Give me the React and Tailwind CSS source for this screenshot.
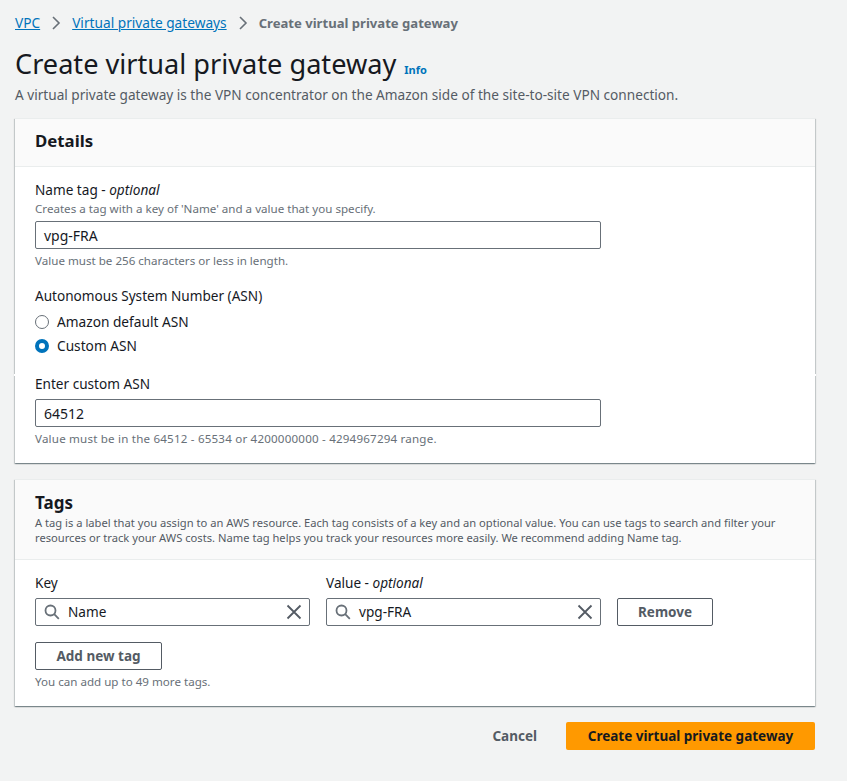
import React from 'react';

const FONT = { fontFamily: '"Noto Sans", sans-serif' };

const Chevron = () => (
  <svg width="10" height="14" viewBox="0 0 10 14" fill="none" stroke="#687078" strokeWidth="1.6" className="mx-[11px] shrink-0">
    <path d="M2 1l6 6-6 6" />
  </svg>
);

const SearchIcon = () => (
  <svg width="16" height="16" viewBox="0 0 16 16" fill="none" stroke="#687078" strokeWidth="1.8" className="shrink-0">
    <circle cx="6.5" cy="6.5" r="5" />
    <path d="M10.2 10.2l4.6 4.6" />
  </svg>
);

const ClearIcon = () => (
  <svg width="16" height="16" viewBox="0 0 16 16" fill="none" stroke="#545b64" strokeWidth="1.8" className="shrink-0">
    <path d="M1.5 1.5l13 13M14.5 1.5l-13 13" />
  </svg>
);

const Hint = ({ children }) => (
  <p className="text-[11.6px] leading-[14px] text-[#687078]">{children}</p>
);

const Label = ({ children }) => (
  <label className="block text-[13.6px] leading-[20px] text-[#16191f]">{children}</label>
);

const TextInput = ({ value }) => (
  <div className="w-[566px] h-[28px] flex items-center px-[8px] bg-white border border-[#687078] rounded-[2px] text-[14px] text-[#16191f]">
    {value}
  </div>
);

const Radio = ({ checked, label }) => (
  <div className="flex items-center gap-[8px] h-[24px]">
    {checked ? (
      <span className="w-[14px] h-[14px] rounded-full border-[4px] border-[#0073bb] bg-white" />
    ) : (
      <span className="w-[14px] h-[14px] rounded-full border border-[#687078] bg-white" />
    )}
    <span className="text-[13.7px] leading-[20px] text-[#16191f]">{label}</span>
  </div>
);

const SearchInput = ({ value }) => (
  <div className="w-[275px] h-[28px] flex items-center bg-white border border-[#687078] rounded-[2px] pl-[8px] pr-[7px]">
    <SearchIcon />
    <span className="ml-[8px] flex-1 text-[13.6px] text-[#16191f]">{value}</span>
    <ClearIcon />
  </div>
);

const OutlineButton = ({ children, width }) => (
  <button className={`${width} h-[28px] bg-white border border-[#545b64] rounded-[2px] text-[13.5px] font-bold text-[#545b64]`}>
    {children}
  </button>
);

const Card = ({ children }) => (
  <section className="w-[800px] bg-white shadow-[0_1px_1px_0_rgba(0,28,36,0.3),1px_1px_1px_0_rgba(0,28,36,0.15),-1px_1px_1px_0_rgba(0,28,36,0.15)] border-t border-[#eaeded]">
    {children}
  </section>
);

export default function App() {
  return (
    <div style={FONT} className="w-[847px] h-[781px] overflow-hidden bg-[#f2f3f3] pl-[15px]">
      <nav className="pt-[10px] h-[36px] flex items-center text-[13.7px] leading-[20px]">
        <a className="text-[#0073bb] underline">VPC</a>
        <Chevron />
        <a className="text-[#0073bb] underline">Virtual private gateways</a>
        <Chevron />
        <span className="text-[13.1px] font-bold text-[#687078]">Create virtual private gateway</span>
      </nav>

      <div className="mt-[8px] flex items-baseline h-[40px]">
        <h1 className="text-[27.15px] leading-[40px] font-normal text-[#16191f]">Create virtual private gateway</h1>
        <a className="ml-[8px] text-[11px] font-bold text-[#0073bb]">Info</a>
      </div>
      <p className="mt-[1px] text-[13.64px] leading-[20px] text-[#545b64] mb-[13px]">
        A virtual private gateway is the VPN concentrator on the Amazon side of the site-to-site VPN connection.
      </p>

      <Card>
        <div className="h-[48px] px-[20px] pb-[4px] flex items-center bg-[#fafafa] border-b border-[#eaeded]">
          <h2 className="text-[16.8px] font-bold text-[#16191f]">Details</h2>
        </div>
        <div className="px-[20px] pt-[13px] pb-[17px]">
          <Label>Name tag - <i>optional</i></Label>
          <div className="mt-[2px]"><Hint>Creates a tag with a key of 'Name' and a value that you specify.</Hint></div>
          <div className="mt-[5px]"><TextInput value="vpg-FRA" /></div>
          <div className="mt-[5px]"><Hint>Value must be 256 characters or less in length.</Hint></div>

          <div className="mt-[18px]"><Label>Autonomous System Number (ASN)</Label></div>
          <div className="mt-[4px]">
            <Radio label="Amazon default ASN" />
            <Radio checked label="Custom ASN" />
          </div>

          <div className="relative mt-[16px]">
            {/* small break in the card edge where the custom ASN block starts */}
            <div className="absolute top-0 -left-[21px] w-[802px] h-[2px] bg-white" />
            <Label>Enter custom ASN</Label>
          </div>
          <div className="mt-[5px]"><TextInput value="64512" /></div>
          <div className="mt-[5px] tracking-[0.19px]"><Hint>Value must be in the 64512 - 65534 or 4200000000 - 4294967294 range.</Hint></div>
        </div>
      </Card>

      <div className="mt-[16px]">
        <Card>
          <div className="h-[80px] px-[20px] pt-[12px] bg-[#fafafa] border-b border-[#eaeded]">
            <h2 className="text-[17px] leading-[22px] font-bold text-[#16191f]">Tags</h2>
            <p className="mt-[1px] text-[11.18px] leading-[15px] text-[#545b64] w-[760px]">
              A tag is a label that you assign to an AWS resource. Each tag consists of a key and an optional value. You can use tags to search and filter your resources or track your AWS costs. Name tag helps you track your resources more easily. We recommend adding Name tag.
            </p>
          </div>
          <div className="px-[20px] pt-[13px] pb-[17px]">
            <div className="flex items-end">
              <div>
                <Label>Key</Label>
                <div className="mt-[5px]"><SearchInput value="Name" /></div>
              </div>
              <div className="ml-[16px]">
                <Label>Value - <i>optional</i></Label>
                <div className="mt-[5px]"><SearchInput value="vpg-FRA" /></div>
              </div>
              <div className="ml-[16px]"><OutlineButton width="w-[96px]">Remove</OutlineButton></div>
            </div>
            <div className="mt-[16px]"><OutlineButton width="w-[127px]">Add new tag</OutlineButton></div>
            <div className="mt-[5px]"><Hint>You can add up to 49 more tags.</Hint></div>
          </div>
        </Card>
      </div>

      <div className="w-[800px] mt-[16px] flex items-center justify-end">
        <span className="text-[13.5px] font-bold text-[#545b64]">Cancel</span>
        <button className="ml-[29px] w-[249px] h-[28px] bg-[#ff9900] rounded-[2px] text-[13.5px] font-bold text-[#16191f]">
          Create virtual private gateway
        </button>
      </div>
    </div>
  );
}
